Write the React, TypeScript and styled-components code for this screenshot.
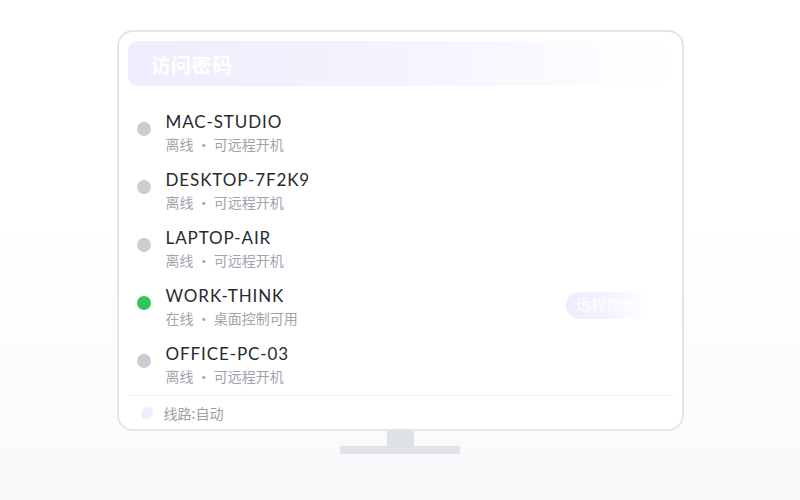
import styled, { createGlobalStyle } from 'styled-components';

interface IDevice {
  name: string;
  online: boolean;
  status: string;
}

const devices: IDevice[] = [
  { name: 'MAC-STUDIO', online: false, status: '离线 · 可远程开机' },
  { name: 'DESKTOP-7F2K9', online: false, status: '离线 · 可远程开机' },
  { name: 'LAPTOP-AIR', online: false, status: '离线 · 可远程开机' },
  { name: 'WORK-THINK', online: true, status: '在线 · 桌面控制可用' },
  { name: 'OFFICE-PC-03', online: false, status: '离线 · 可远程开机' },
];

export default function App() {
  return (
    <>
      <GlobalStyle />
      <Page>
        <Monitor>
          <Header>
            <HeaderTitle>访问密码</HeaderTitle>
          </Header>

          <DeviceList>
            {devices.map((d) => (
              <DeviceRow key={d.name}>
                <StatusDot $online={d.online} />
                <DeviceInfo>
                  <DeviceName>{d.name}</DeviceName>
                  <DeviceStatus>{d.status}</DeviceStatus>
                </DeviceInfo>
                {d.online && <ControlButton>远程控制</ControlButton>}
              </DeviceRow>
            ))}
          </DeviceList>

          <Footer>
            <FooterDot />
            <FooterText>线路:自动</FooterText>
          </Footer>
        </Monitor>
        <Neck />
        <Base />
      </Page>
    </>
  );
}

const GlobalStyle = createGlobalStyle`
  html, body {
    margin: 0;
    padding: 0;
    height: 100%;
  }
  body {
    font-family: Lato, "Noto Sans CJK SC", sans-serif;
    background: linear-gradient(180deg, #ffffff 0%, #ffffff 45%, #f9f9fb 100%);
    min-height: 500px;
  }
`;

const Page = styled.div`
  display: flex;
  flex-direction: column;
  align-items: center;
  padding-top: 30px;
`;

const Monitor = styled.div`
  box-sizing: border-box;
  display: flex;
  flex-direction: column;
  width: 567px;
  height: 401px;
  border: 2px solid #e3e5e9;
  border-radius: 16px;
  background: #ffffff;
  padding: 9px 9px 0;
`;

const Header = styled.div`
  box-sizing: border-box;
  display: flex;
  align-items: center;
  height: 45px;
  padding: 2px 23px 0;
  border-radius: 10px;
  background: linear-gradient(90deg, #efecfd 0%, #f4f2fe 45%, #fbfaff 80%, #ffffff 100%);
`;

const HeaderTitle = styled.div`
  font-family: "Noto Sans CJK SC", sans-serif;
  font-size: 20px;
  font-weight: 700;
  color: #ffffff;
  letter-spacing: 0.5px;
`;

const DeviceList = styled.ul`
  list-style: none;
  margin: 0;
  padding: 25px 0 0 9px;
  display: flex;
  flex-direction: column;
  gap: 14px;
`;

const DeviceRow = styled.li`
  display: flex;
  align-items: flex-start;
  height: 44px;
  padding-right: 23px;
`;

const StatusDot = styled.span<{ $online: boolean }>`
  flex: none;
  width: 14px;
  height: 14px;
  margin-top: 11px;
  border-radius: 50%;
  background: ${(p) => (p.$online ? '#31c65b' : '#c9cdd4')};
`;

const DeviceInfo = styled.div`
  display: flex;
  flex-direction: column;
  margin-left: 15px;
`;

const DeviceName = styled.span`
  font-size: 17px;
  line-height: 22px;
  color: #262a30;
  letter-spacing: 0.9px;
`;

const DeviceStatus = styled.span`
  margin-top: 1px;
  font-family: "Noto Sans CJK SC", sans-serif;
  font-size: 14px;
  line-height: 20px;
  color: #a0a5ad;
`;

const ControlButton = styled.button`
  margin-left: auto;
  margin-top: 7px;
  width: 84px;
  height: 27px;
  border: 0;
  border-radius: 14px;
  padding: 0 0 0 10px;
  text-align: left;
  font-family: serif;
  font-size: 15px;
  color: #ffffff;
  background: linear-gradient(90deg, #efebfe 0%, #f5f2ff 50%, #ffffff 100%);
`;

const Footer = styled.div`
  box-sizing: border-box;
  display: flex;
  align-items: center;
  margin-top: auto;
  height: 34px;
  border-top: 1px solid #eef0f3;
  padding-left: 13px;
`;

const FooterDot = styled.span`
  width: 12px;
  height: 12px;
  border-radius: 50%;
  background: #efecfd;
`;

const FooterText = styled.span`
  margin-left: 11px;
  font-family: "Noto Sans CJK SC", sans-serif;
  font-size: 14px;
  color: #9aa0a8;
`;

const Neck = styled.div`
  width: 27px;
  height: 15px;
  background: #dfe2e7;
`;

const Base = styled.div`
  width: 120px;
  height: 8px;
  background: #dfe2e7;
`;
